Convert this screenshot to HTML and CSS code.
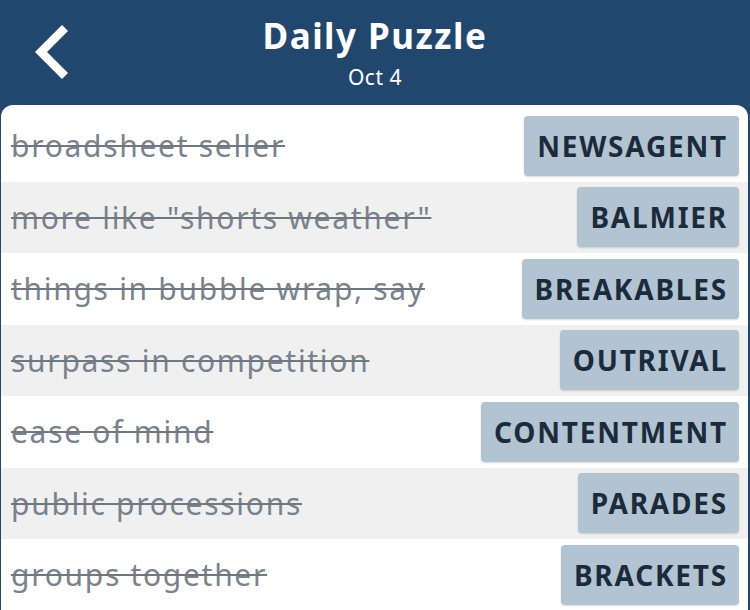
FILE: index.html
```html
<!DOCTYPE html>
<html lang="en">
<head>
  <meta charset="UTF-8" />
  <meta name="viewport" content="width=device-width, initial-scale=1" />
  <title>Daily Puzzle</title>
  <link rel="stylesheet" href="styles.css">
</head>
<body>
  <header class="top-bar">
    <button class="btn-back" aria-label="Back">
      <svg width="40" height="60" viewBox="0 0 40 60">
        <polyline points="29,6 8,27 29,48" fill="none" stroke="#ffffff" stroke-width="8.5" stroke-linecap="square" stroke-linejoin="miter"/>
      </svg>
    </button>
    <div class="title-box">
      <h1>Daily Puzzle</h1>
      <p class="date">Oct 4</p>
    </div>
  </header>

  <main class="answers-panel">
    <ul class="answer-list">
      <li class="answer-row">
        <span class="clue">broadsheet seller</span>
        <span class="answer">NEWSAGENT</span>
      </li>
      <li class="answer-row">
        <span class="clue">more like "shorts weather"</span>
        <span class="answer">BALMIER</span>
      </li>
      <li class="answer-row">
        <span class="clue">things in bubble wrap, say</span>
        <span class="answer">BREAKABLES</span>
      </li>
      <li class="answer-row">
        <span class="clue">surpass in competition</span>
        <span class="answer">OUTRIVAL</span>
      </li>
      <li class="answer-row">
        <span class="clue">ease of mind</span>
        <span class="answer">CONTENTMENT</span>
      </li>
      <li class="answer-row">
        <span class="clue">public processions</span>
        <span class="answer">PARADES</span>
      </li>
      <li class="answer-row">
        <span class="clue">groups together</span>
        <span class="answer">BRACKETS</span>
      </li>
    </ul>
  </main>
</body>
</html>
```

FILE: styles.css
```css
/* Base */
body {
  margin: 0;
  background: #21476f;
  font-family: 'Noto Sans', 'Open Sans', sans-serif;
  overflow: hidden;
}

/* Cabecera */
.top-bar {
  height: 105px;
  display: flex;
  align-items: center;
  justify-content: center;
  position: relative;
  color: #ffffff;
}

.btn-back {
  position: absolute;
  left: 33px;
  top: 25px;
  background: none;
  border: none;
  padding: 0;
  cursor: pointer;
}

.btn-back svg {
  display: block;
}

.title-box {
  text-align: center;
  margin-top: -2px;
}

h1 {
  margin: 0;
  font-size: 35px;
  font-weight: 700;
  line-height: 46px;
  letter-spacing: 1.5px;
}

.date {
  margin: 5px 0 0;
  font-size: 21px;
  line-height: 26px;
  letter-spacing: 0.5px;
}

/* Panel de respuestas */
.answers-panel {
  background: #ffffff;
  border-radius: 12px 12px 0 0;
  margin: 0 2px 0 1px;
  padding-top: 5px;
  min-height: 520px;
}

.answer-list {
  list-style: none;
  margin: 0;
  padding: 0;
}

.answer-row {
  height: 71.5px;
  display: flex;
  align-items: center;
  justify-content: space-between;
  padding: 0 9px 0 10px;
}

.answer-row:nth-child(even) {
  background: #f0f0f0;
}

.clue {
  font-size: 30px;
  letter-spacing: 1.7px;
  color: #7a828c;
  text-decoration: line-through;
  text-decoration-color: #6f7781;
  text-decoration-thickness: 2px;
  white-space: nowrap;
}

.answer {
  height: 60px;
  display: flex;
  align-items: center;
  padding: 0 11px 0 13px;
  background: #b2c3d1;
  border-radius: 4px;
  box-shadow: 0 1px 2px rgba(0, 0, 0, 0.15);
  color: #1c2b3c;
  font-size: 28px;
  font-weight: 700;
  letter-spacing: 1.8px;
}
```
